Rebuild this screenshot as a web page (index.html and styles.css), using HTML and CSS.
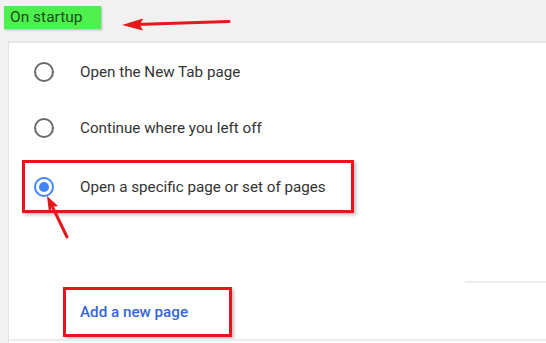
FILE: index.html
```html
<!DOCTYPE html>
<html>
<head>
<meta charset="utf-8">
<link rel="stylesheet" href="styles.css">
</head>
<body>
<div class="page">
  <header class="header">
    <span class="label">On startup</span>
  </header>
  <section class="card">
    <div class="row">
      <span class="radio"></span>
      <span class="text">Open the New Tab page</span>
    </div>
    <div class="row">
      <span class="radio"></span>
      <span class="text">Continue where you left off</span>
    </div>
    <div class="row row-boxed">
      <span class="radio radio-on"></span>
      <span class="text">Open a specific page or set of pages</span>
    </div>
    <div class="divider"></div>
    <div class="add-box">
      <span class="add-link">Add a new page</span>
    </div>
    <div class="bottom-line"></div>
  </section>
  <svg class="arrow arrow-top" width="546" height="343" viewBox="0 0 546 343">
    <line x1="229" y1="21.5" x2="136" y2="24.5" stroke="#e5181c" stroke-width="3" stroke-linecap="round"/>
    <polygon points="122,25 143,18.5 140,25 143,30.5" fill="#e5181c"/>
    <line x1="67" y1="237" x2="53" y2="208" stroke="#e5181c" stroke-width="3" stroke-linecap="round"/>
    <polygon points="47,196 58,206 52,207 49,213" fill="#e5181c"/>
  </svg>
</div>
</body>
</html>
```
FILE: styles.css
```css
html, body {
  margin: 0;
  padding: 0;
}
body {
  background: #f1f1f1;
  font-family: Roboto, "Liberation Sans", sans-serif;
  width: 546px;
  height: 343px;
  overflow: hidden;
}
.page {
  position: relative;
  width: 546px;
  height: 343px;
}
.header {
  height: 41px;
  padding: 6px 0 0 4px;
  box-sizing: border-box;
}
.label {
  display: inline-block;
  width: 97px;
  height: 23px;
  box-sizing: border-box;
  padding-left: 6px;
  background: #4ef04e;
  color: #1d4d1d;
  font-size: 15.5px;
  line-height: 23px;
  box-shadow: 1px 1px 2px rgba(0,0,0,0.25);
}
.card {
  margin-left: 8px;
  height: 302px;
  background: #fff;
  border-top: 2px solid #e8e8e8;
  border-left: 1px solid #e2e2e2;
  box-sizing: border-box;
  padding-top: 1px;
  position: relative;
}
.row {
  display: flex;
  align-items: center;
  height: 56px;
  padding-left: 25px;
  color: #333;
  font-size: 15.2px;
}
.radio {
  width: 20px;
  height: 20px;
  box-sizing: border-box;
  border: 2px solid #6a6a6a;
  border-radius: 50%;
  margin-right: 26px;
  flex: none;
  position: relative;
}
.radio-on {
  border-color: #4285f4;
}
.radio-on::after {
  content: "";
  position: absolute;
  left: 3px;
  top: 3px;
  width: 10px;
  height: 10px;
  border-radius: 50%;
  background: #4285f4;
}
.row-boxed {
  margin: 4px 0 0 13px;
  width: 332px;
  height: 53px;
  box-sizing: border-box;
  border: 3px solid #e8141b;
  padding-left: 9px;
  box-shadow: 2px 2px 3px rgba(0,0,0,0.25);
}
.divider {
  margin: 68px 0 0 456px;
  height: 2px;
  background: #ececec;
}
.add-box {
  margin: 4px 0 0 54px;
  width: 169px;
  height: 50px;
  box-sizing: border-box;
  border: 3px solid #e8141b;
  padding-left: 14px;
  display: flex;
  align-items: center;
  box-shadow: 2px 2px 3px rgba(0,0,0,0.25);
}
.add-link {
  color: #3367d6;
  font-weight: 500;
  font-size: 15.2px;
}
.bottom-line {
  margin-top: 2px;
  height: 2px;
  background: #ececec;
}
.arrow {
  position: absolute;
  left: 0;
  top: 0;
  pointer-events: none;
}
```
